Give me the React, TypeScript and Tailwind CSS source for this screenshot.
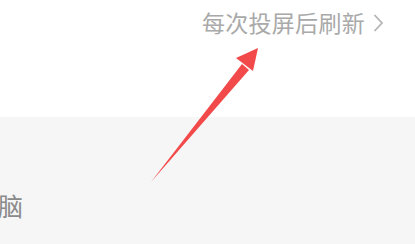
import React from "react";

export default function App() {
  const font = { fontFamily: '"Noto Sans CJK SC", "Noto Sans", sans-serif' };
  return (
    <div className="relative w-[415px] h-[244px] overflow-hidden bg-white" style={font}>
      <div className="h-[117px] bg-white flex justify-end items-start pr-[31px] pt-[5px]">
        <div className="flex items-center gap-[8px] text-[#a9a9a9]">
          <span className="text-[23px] leading-[34px] tracking-[0.3px]">每次投屏后刷新</span>
          <svg width="11" height="20" viewBox="0 0 11 20" className="mt-[1px]">
            <polyline points="1.5,2 9,10 1.5,18" fill="none" stroke="#b5b5b5" strokeWidth="1.8" />
          </svg>
        </div>
      </div>
      <div className="h-[127px] bg-[#f6f6f6] pt-[71px]">
        <span className="block -ml-[2px] text-[25px] leading-[34px] text-[#8a8a8a]">脑</span>
      </div>
      <svg className="absolute left-0 top-0" width="415" height="244" viewBox="0 0 415 244">
        <polygon points="151,182 242,64 249,70" fill="#f24a4a" />
        <polygon points="258,48 236,58 253,71" fill="#f24a4a" />
      </svg>
    </div>
  );
}
